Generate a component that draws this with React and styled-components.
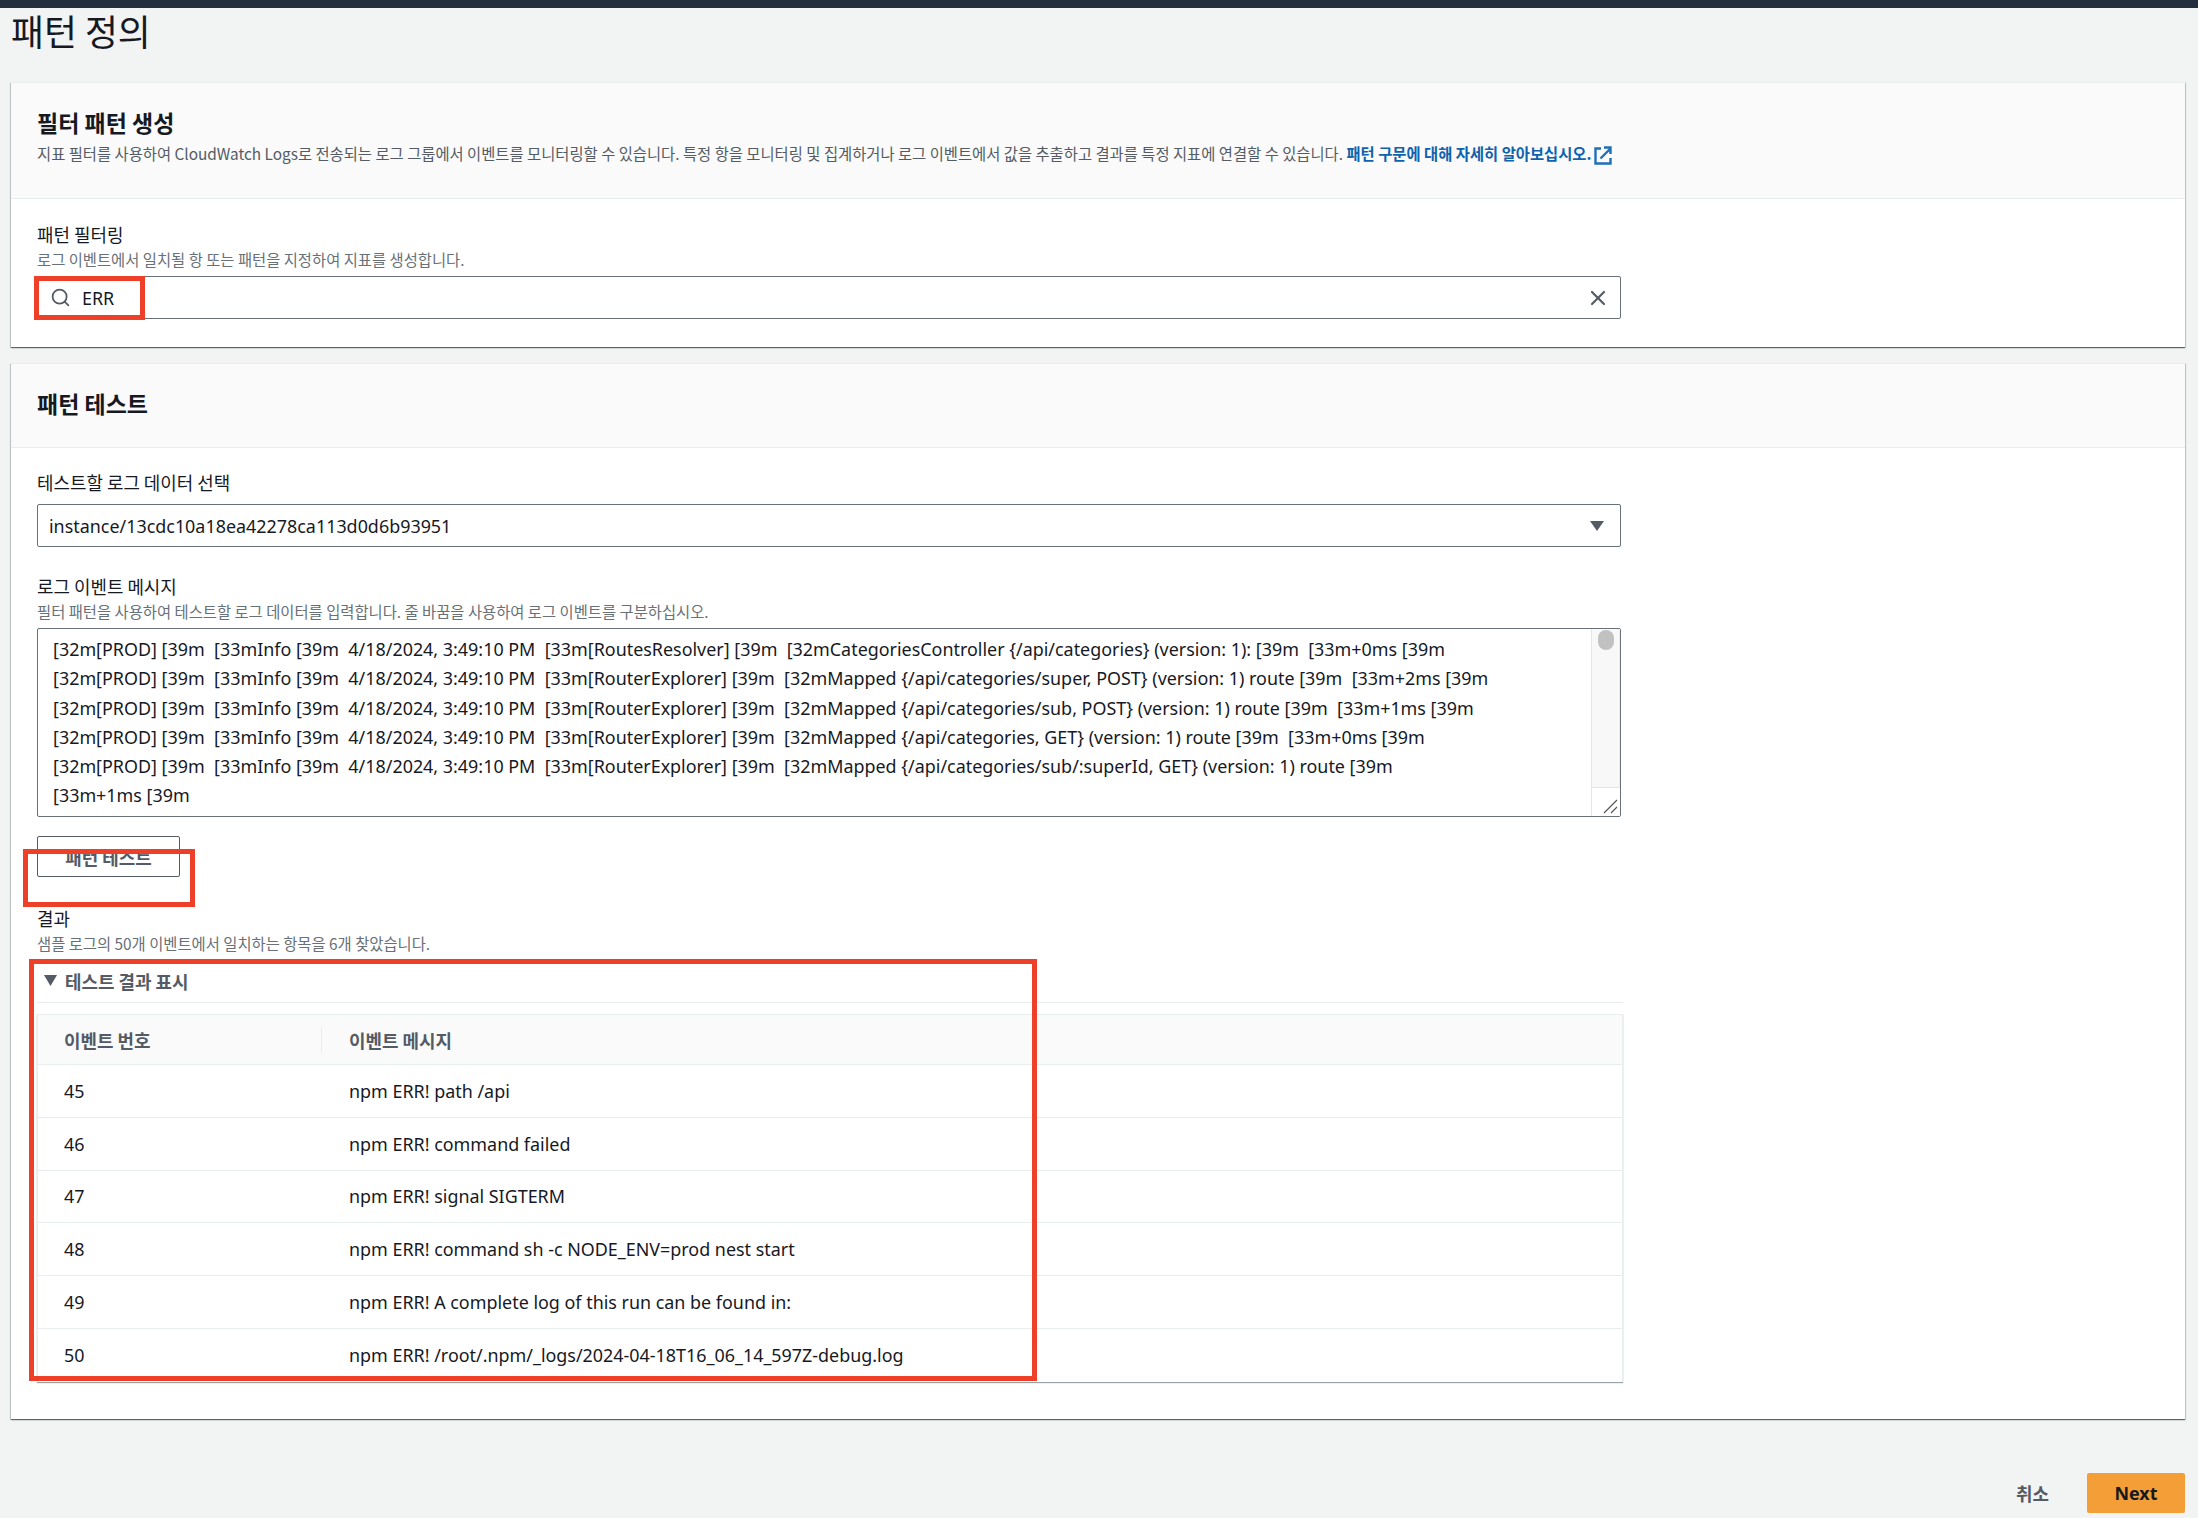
import React from "react";
import styled, { createGlobalStyle } from "styled-components";
import { Search, X } from "lucide-react";

const Global = createGlobalStyle`
  html, body { margin: 0; padding: 0; background: #f2f3f3; }
  body { font-family: "Noto Sans", "Noto Sans CJK KR", sans-serif; color: #16191f; }
  * { box-sizing: border-box; }
`;

const Page = styled.div`
  width: 2198px;
  height: 1518px;
  overflow: hidden;
  display: flex;
  flex-direction: column;
`;
const TopBar = styled.div`height: 8px; background: #232f3e; flex: none;`;
const Main = styled.main`padding: 0 13px 0 11px; display: flex; flex-direction: column;`;
const Title = styled.h1`
  margin: 0;
  height: 74px;
  padding-left: 0;
  font-size: 35.8px;
  line-height: 44px;
  font-weight: 400;
  font-family: "Noto Sans CJK KR", sans-serif;
  color: #16191f;
`;
const Card = styled.section`
  background: #fff;
  border-top: 1px solid #eaeded;
  box-shadow: 0 1px 1px 0 rgba(0,28,36,.5), 1px 1px 1px 0 rgba(0,28,36,.15), -1px 1px 1px 0 rgba(0,28,36,.15);
  & + & { margin-top: 16px; }
`;
const CardHeader = styled.header`
  background: #fafafa;
  border-bottom: 1px solid #eaeded;
  padding: ${p => p.$pad}px 26px 0;
  height: ${p => p.$h}px;
`;
const Heading = styled.h2`
  margin: 0;
  font-size: 23px;
  line-height: 30px;
  font-weight: 700;
  font-family: "Noto Sans CJK KR", sans-serif;
`;
const Description = styled.p`
  margin: 5px 0 0;
  font-size: 15.36px;
  line-height: 22px;
  color: #545b64;
  font-family: "Noto Sans CJK KR", sans-serif;
  white-space: nowrap;
`;
const DocLink = styled.a`
  color: #0f62ae;
  font-weight: 700;
  text-decoration: none;
  svg { vertical-align: -5px; margin-left: 2px; }
`;
const CardBody = styled.div`
  padding: ${p => p.$top}px 26px ${p => p.$bottom}px;
`;
const Field = styled.div`
  position: relative;
  margin-top: ${p => p.$mt || 0}px;
`;
const Label = styled.div`
  font-size: 17.92px;
  line-height: 26px;
  font-family: "Noto Sans CJK KR", sans-serif;
`;
const Hint = styled.div`
  font-size: 15.36px;
  line-height: 22px;
  margin-top: 1px;
  color: #687078;
  font-family: "Noto Sans CJK KR", sans-serif;
`;
const Control = styled.div`
  position: relative;
  width: 1584px;
  height: ${p => p.$h}px;
  margin-top: ${p => p.$mt}px;
  border: 1px solid #687078;
  border-radius: 2px;
  background: #fff;
  display: flex;
  align-items: center;
`;
const SearchValue = styled.span`
  font-size: 17.92px;
  margin-left: 11px;
  flex: 1;
`;
const SearchIconWrap = styled.span`
  display: flex;
  margin-left: 12px;
  color: #545b64;
`;
const ClearWrap = styled.span`
  display: flex;
  margin-right: 10px;
  color: #545b64;
`;
const Highlight = styled.div`
  position: absolute;
  border: 5px solid #ee4028;
  pointer-events: none;
  left: ${p => p.$l}px;
  top: ${p => p.$t}px;
  width: ${p => p.$w}px;
  height: ${p => p.$h}px;
`;
const SelectValue = styled.span`
  flex: 1;
  padding-left: 11px;
  font-size: 17.92px;
`;
const Caret = styled.svg`
  margin-right: ${p => p.$mr || 0}px;
  flex: none;
`;
const LogBox = styled.div`
  width: 1584px;
  height: 189px;
  margin-top: 6px;
  border: 1px solid #687078;
  border-radius: 2px;
  display: flex;
  overflow: hidden;
`;
const LogText = styled.div`
  flex: 1;
  padding: 6px 0 0 15px;
  font-size: 17.92px;
  line-height: 29.3px;
`;
const LogLine = styled.div`white-space: pre;`;
const ScrollColumn = styled.div`
  width: 29px;
  flex: none;
  display: flex;
  flex-direction: column;
`;
const ScrollTrack = styled.div`
  flex: 1;
  background: #f8f8f8;
  border-left: 1px solid #e6e6e6;
  border-right: 1px solid #eeeeee;
  padding: 1px 0 0 6px;
`;
const ScrollThumb = styled.div`
  width: 16px;
  height: 20px;
  border-radius: 8px;
  background: #c1c1c1;
`;
const ScrollCorner = styled.div`
  height: 29px;
  flex: none;
  background: #fff;
  border-top: 1px solid #e6e6e6;
  border-left: 1px solid #e6e6e6;
  display: flex;
  align-items: flex-end;
  justify-content: flex-end;
  padding: 0 2px 2px 0;
`;
const OutlineButton = styled.button`
  display: block;
  width: 143px;
  height: 41px;
  margin-top: 19px;
  border: 1px solid #545b64;
  border-radius: 2px;
  background: #fff;
  color: #545b64;
  font-size: 17.92px;
  font-weight: 700;
  font-family: "Noto Sans CJK KR", sans-serif;
  padding: 0;
`;
const ExpandHeader = styled.div`
  margin-top: 5px;
  height: 44px;
  width: 1586px;
  border-bottom: 1px solid #eaeded;
  display: flex;
  align-items: center;
  gap: 8px;
  padding-left: 7px;
  font-size: 17.92px;
  font-weight: 700;
  color: #545b64;
  font-family: "Noto Sans CJK KR", sans-serif;
`;
const Table = styled.div`
  width: 1586px;
  margin-top: 11px;
  border: 1px solid #eaeded;
  border-bottom: none;
  box-shadow: 0 1px 1px 0 rgba(0,28,36,.4);
  font-size: 17.92px;
`;
const HeadRow = styled.div`
  display: grid;
  grid-template-columns: 283px 1fr;
  height: 50px;
  align-items: center;
  background: #fafafa;
  border-bottom: 1px solid #eaeded;
  font-weight: 700;
  color: #545b64;
  font-family: "Noto Sans CJK KR", sans-serif;
`;
const HeadCell = styled.div`
  padding-left: ${p => p.$first ? 26 : 27}px;
  height: 26px;
  line-height: 26px;
  border-left: ${p => p.$first ? "none" : "1px solid #eaeded"};
`;
const Row = styled.div`
  display: grid;
  grid-template-columns: 283px 1fr;
  height: 52.8px;
  align-items: center;
  border-bottom: 1px solid #eaeded;
  &:last-child { border-bottom: none; }
`;
const Cell = styled.div`
  padding-left: ${p => p.$first ? 26 : 28}px;
`;
const Footer = styled.footer`
  display: flex;
  justify-content: flex-end;
  align-items: center;
  gap: 38px;
  margin-top: 54px;
`;
const LinkButton = styled.button`
  border: none;
  background: none;
  padding: 0;
  color: #545b64;
  font-size: 17.92px;
  font-weight: 700;
  font-family: "Noto Sans CJK KR", sans-serif;
`;
const PrimaryButton = styled.button`
  width: 98px;
  height: 40px;
  border: none;
  border-radius: 2px;
  background: #f39e37;
  color: #16191f;
  font-size: 17.92px;
  font-weight: 700;
  font-family: "Noto Sans", sans-serif;
  padding: 0;
`;

const logLines = [
  "[32m[PROD] [39m  [33mInfo [39m  4/18/2024, 3:49:10 PM  [33m[RoutesResolver] [39m  [32mCategoriesController {/api/categories} (version: 1): [39m  [33m+0ms [39m",
  "[32m[PROD] [39m  [33mInfo [39m  4/18/2024, 3:49:10 PM  [33m[RouterExplorer] [39m  [32mMapped {/api/categories/super, POST} (version: 1) route [39m  [33m+2ms [39m",
  "[32m[PROD] [39m  [33mInfo [39m  4/18/2024, 3:49:10 PM  [33m[RouterExplorer] [39m  [32mMapped {/api/categories/sub, POST} (version: 1) route [39m  [33m+1ms [39m",
  "[32m[PROD] [39m  [33mInfo [39m  4/18/2024, 3:49:10 PM  [33m[RouterExplorer] [39m  [32mMapped {/api/categories, GET} (version: 1) route [39m  [33m+0ms [39m",
  "[32m[PROD] [39m  [33mInfo [39m  4/18/2024, 3:49:10 PM  [33m[RouterExplorer] [39m  [32mMapped {/api/categories/sub/:superId, GET} (version: 1) route [39m",
  "[33m+1ms [39m",
];

const events = [
  ["45", "npm ERR! path /api"],
  ["46", "npm ERR! command failed"],
  ["47", "npm ERR! signal SIGTERM"],
  ["48", "npm ERR! command sh -c NODE_ENV=prod nest start"],
  ["49", "npm ERR! A complete log of this run can be found in:"],
  ["50", "npm ERR! /root/.npm/_logs/2024-04-18T16_06_14_597Z-debug.log"],
];

const ExternalIcon = () => (
  <svg width="18" height="19" viewBox="0 0 18 19" fill="none" stroke="#1f6fb8" strokeWidth="2.4">
    <path d="M7 2.5H1.5V17.5H16.5V12" />
    <path d="M6.5 12.5L16 3M10 1.5H16.5V8" />
  </svg>
);

export default function App() {
  return (
    <Page>
      <Global />
      <TopBar />
      <Main>
        <Title>패턴 정의</Title>
        <Card>
          <CardHeader $pad={24} $h={116}>
            <Heading>필터 패턴 생성</Heading>
            <Description>
              지표 필터를 사용하여 CloudWatch Logs로 전송되는 로그 그룹에서 이벤트를 모니터링할 수 있습니다. 특정 항을 모니터링 및 집계하거나 로그 이벤트에서 값을 추출하고 결과를 특정 지표에 연결할 수 있습니다.{" "}
              <DocLink href="#">패턴 구문에 대해 자세히 알아보십시오.<ExternalIcon /></DocLink>
            </Description>
          </CardHeader>
          <CardBody $top={22} $bottom={28}>
            <Field>
              <Label>패턴 필터링</Label>
              <Hint>로그 이벤트에서 일치될 항 또는 패턴을 지정하여 지표를 생성합니다.</Hint>
              <Control $h={43} $mt={6}>
                <SearchIconWrap><Search size={21} strokeWidth={2} /></SearchIconWrap>
                <SearchValue>ERR</SearchValue>
                <ClearWrap><X size={24} strokeWidth={2.2} /></ClearWrap>
                <Highlight $l={-4} $t={-1} $w={111} $h={44} />
              </Control>
            </Field>
          </CardBody>
        </Card>
        <Card>
          <CardHeader $pad={24} $h={84}>
            <Heading>패턴 테스트</Heading>
          </CardHeader>
          <CardBody $top={21} $bottom={37}>
            <Field>
              <Label>테스트할 로그 데이터 선택</Label>
              <Control $h={43} $mt={9}>
                <SelectValue>instance/13cdc10a18ea42278ca113d0d6b93951</SelectValue>
                <Caret $mr={15} width="16" height="12" viewBox="0 0 16 12"><path d="M1 1H15L8 11Z" fill="#545b64" /></Caret>
              </Control>
            </Field>
            <Field $mt={26}>
              <Label>로그 이벤트 메시지</Label>
              <Hint>필터 패턴을 사용하여 테스트할 로그 데이터를 입력합니다. 줄 바꿈을 사용하여 로그 이벤트를 구분하십시오.</Hint>
              <LogBox>
                <LogText>
                  {logLines.map((l, i) => <LogLine key={i}>{l}</LogLine>)}
                </LogText>
                <ScrollColumn>
                  <ScrollTrack><ScrollThumb /></ScrollTrack>
                  <ScrollCorner>
                    <svg width="15" height="15" viewBox="0 0 15 15" stroke="#555" strokeWidth="1.2">
                      <path d="M1 14L14 1M8 14L14 8" />
                    </svg>
                  </ScrollCorner>
                </ScrollColumn>
              </LogBox>
            </Field>
            <Field>
              <OutlineButton>패턴 테스트</OutlineButton>
              <Highlight $l={-14} $t={13} $w={172} $h={58} />
            </Field>
            <Field $mt={28}>
              <Label>결과</Label>
              <Hint>샘플 로그의 50개 이벤트에서 일치하는 항목을 6개 찾았습니다.</Hint>
              <ExpandHeader>
                <svg width="13" height="11" viewBox="0 0 13 11"><path d="M0 0H13L6.5 11Z" fill="#545b64" /></svg>
                테스트 결과 표시
              </ExpandHeader>
              <Table>
                <HeadRow>
                  <HeadCell $first>이벤트 번호</HeadCell>
                  <HeadCell>이벤트 메시지</HeadCell>
                </HeadRow>
                {events.map(([n, m]) => (
                  <Row key={n}>
                    <Cell $first>{n}</Cell>
                    <Cell>{m}</Cell>
                  </Row>
                ))}
              </Table>
              <Highlight $l={-8} $t={54} $w={1008} $h={422} />
            </Field>
          </CardBody>
        </Card>
        <Footer>
          <LinkButton>취소</LinkButton>
          <PrimaryButton>Next</PrimaryButton>
        </Footer>
      </Main>
    </Page>
  );
}
